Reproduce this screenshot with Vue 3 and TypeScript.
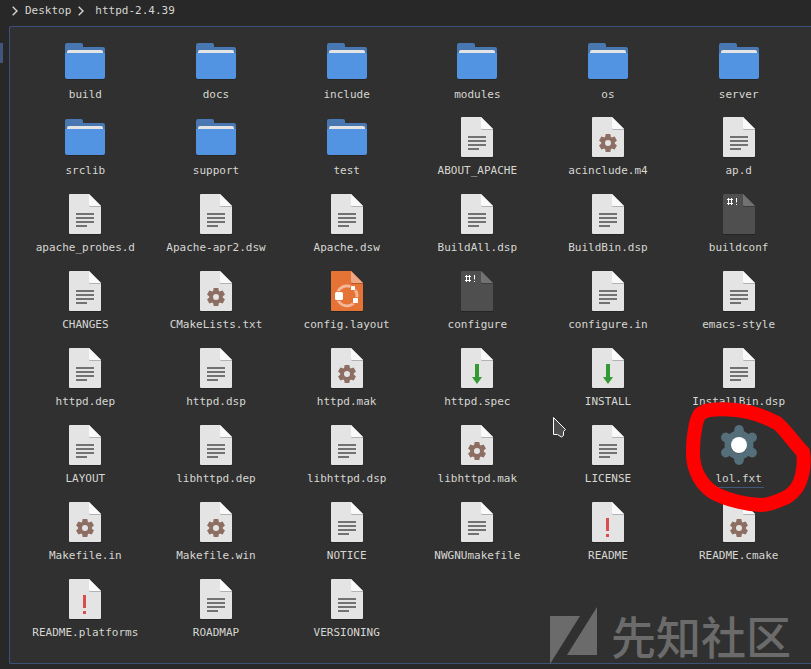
<script setup lang="ts">
type Kind = 'folder' | 'text' | 'gear' | 'script' | 'layout' | 'install' | 'readme' | 'program'

interface Entry {
  name: string
  kind: Kind
  selected?: boolean
}

const entries: Entry[] = [
  { name: 'build', kind: 'folder' },
  { name: 'docs', kind: 'folder' },
  { name: 'include', kind: 'folder' },
  { name: 'modules', kind: 'folder' },
  { name: 'os', kind: 'folder' },
  { name: 'server', kind: 'folder' },
  { name: 'srclib', kind: 'folder' },
  { name: 'support', kind: 'folder' },
  { name: 'test', kind: 'folder' },
  { name: 'ABOUT_APACHE', kind: 'text' },
  { name: 'acinclude.m4', kind: 'gear' },
  { name: 'ap.d', kind: 'text' },
  { name: 'apache_probes.d', kind: 'text' },
  { name: 'Apache-apr2.dsw', kind: 'text' },
  { name: 'Apache.dsw', kind: 'text' },
  { name: 'BuildAll.dsp', kind: 'text' },
  { name: 'BuildBin.dsp', kind: 'text' },
  { name: 'buildconf', kind: 'script' },
  { name: 'CHANGES', kind: 'text' },
  { name: 'CMakeLists.txt', kind: 'gear' },
  { name: 'config.layout', kind: 'layout' },
  { name: 'configure', kind: 'script' },
  { name: 'configure.in', kind: 'text' },
  { name: 'emacs-style', kind: 'text' },
  { name: 'httpd.dep', kind: 'text' },
  { name: 'httpd.dsp', kind: 'text' },
  { name: 'httpd.mak', kind: 'gear' },
  { name: 'httpd.spec', kind: 'install' },
  { name: 'INSTALL', kind: 'install' },
  { name: 'InstallBin.dsp', kind: 'text' },
  { name: 'LAYOUT', kind: 'text' },
  { name: 'libhttpd.dep', kind: 'text' },
  { name: 'libhttpd.dsp', kind: 'text' },
  { name: 'libhttpd.mak', kind: 'gear' },
  { name: 'LICENSE', kind: 'text' },
  { name: 'lol.fxt', kind: 'program', selected: true },
  { name: 'Makefile.in', kind: 'gear' },
  { name: 'Makefile.win', kind: 'gear' },
  { name: 'NOTICE', kind: 'text' },
  { name: 'NWGNUmakefile', kind: 'text' },
  { name: 'README', kind: 'readme' },
  { name: 'README.cmake', kind: 'gear' },
  { name: 'README.platforms', kind: 'readme' },
  { name: 'ROADMAP', kind: 'text' },
  { name: 'VERSIONING', kind: 'text' },
]

const pageFill: Partial<Record<Kind, string>> = { script: '#4f4f4f', layout: '#e57335' }
const foldFill: Partial<Record<Kind, string>> = { script: '#727272', layout: '#f0a783' }
const teeth = [0, 60, 120, 180, 240, 300]
</script>

<template>
  <div class="window">
    <nav class="path" aria-label="Path">
      <svg class="chevron" viewBox="0 0 6 10" aria-hidden="true"><path d="M.7.7 5 5 .7 9.3" /></svg>
      <a href="#">Desktop</a>
      <svg class="chevron" viewBox="0 0 6 10" aria-hidden="true"><path d="M.7.7 5 5 .7 9.3" /></svg>
      <a href="#" class="current">httpd-2.4.39</a>
    </nav>

    <div class="body">
      <div class="side"><span class="marker"></span></div>
      <main class="panel">
        <ul class="grid">
          <li v-for="e in entries" :key="e.name" class="entry" :class="{ selected: e.selected }">
            <svg class="icon" viewBox="0 0 48 48" aria-hidden="true">
              <template v-if="e.kind === 'folder'">
                <path d="M4 8q0-2 2-2h14q2 0 2 2v2h20q2 0 2 2v10H4z" fill="#4877b1" />
                <path d="M6 20v-5q0-2 2-2h32q2 0 2 2v5z" fill="#e4e4e4" />
                <path d="M4 18h40v23q0 2-2 2H6q-2 0-2-2z" fill="#272727" />
                <path d="M4 17q0-1 1-1h38q1 0 1 1v23q0 2-2 2H6q-2 0-2-2z" fill="#5294e2" />
              </template>
              <template v-else-if="e.kind === 'program'">
                <circle cx="24" cy="24" r="14.500" fill="#546e7a" />
                <path
                  v-for="t in teeth"
                  :key="t"
                  d="M24 24V8.800"
                  stroke="#546e7a"
                  stroke-width="9.600"
                  stroke-linecap="round"
                  :transform="`rotate(${t} 24 24)`"
                />
                <circle cx="24" cy="24.500" r="8.200" fill="#3f535c" />
                <circle cx="24" cy="24" r="8" fill="#fff" />
              </template>
              <template v-else>
                <path d="M8 6q0-1 1-1h19l12 12v27q0 1-1 1H9q-1 0-1-1z" fill="#252525" />
                <path d="M8 5q0-1 1-1h19l12 12v27q0 1-1 1H9q-1 0-1-1z" :fill="pageFill[e.kind] ?? '#e4e4e4'" />
                <path d="M28 15.500q0 1.500 1.500 1.500H40v-1z" fill="#000" opacity=".22" />
                <path d="M28 4v10.500q0 1.500 1.500 1.500H40z" :fill="foldFill[e.kind] ?? '#fafafa'" />

                <path v-if="e.kind === 'text'" d="M15 23h18v2H15zM15 27h18v2H15zM15 31h18v2H15zM15 35h11v2H15z" fill="#727272" />
                <g v-else-if="e.kind === 'gear'">
                  <path v-for="t in teeth" :key="t" d="M21.700 21h4.600l.8 4h-6.200z" fill="#8d6e63" :transform="`rotate(${t} 24 30)`" />
                  <circle cx="24" cy="30" r="4.800" fill="none" stroke="#8d6e63" stroke-width="3.600" />
                </g>
                <g v-else-if="e.kind === 'script'" fill="none" stroke="#fff">
                  <path d="M13.500 8v7M16.500 8v7M12 9.500h6M12 13.500h6M21.500 8v4.500M21.500 14v1" />
                </g>
                <g v-else-if="e.kind === 'layout'">
                  <circle cx="24" cy="28.800" r="10" fill="none" stroke="#f4b99c" stroke-width="2.800" />
                  <g fill="#fff" stroke="#e57335" stroke-width="1.600" paint-order="stroke">
                    <rect x="12" y="25" width="8" height="8" rx="1.500" />
                    <rect x="28" y="19" width="4" height="4" rx=".5" />
                    <rect x="30" y="31" width="5" height="5" rx=".5" />
                  </g>
                </g>
                <path v-else-if="e.kind === 'install'" d="M22 20h4v13h3l-5 7-5-7h3z" fill="#339933" />
                <path v-else d="M22 20h3v13h-3zM22 36h3v3h-3z" fill="#da4d4d" />
              </template>
            </svg>
            <span class="label">{{ e.name }}</span>
          </li>
        </ul>
      </main>
    </div>

    <svg class="cursor" viewBox="0 0 14 22" aria-hidden="true">
      <path d="M1.500 1.500V18.500H5.500L9.500 21 11.500 19.500V15.500L13.500 13.500z" />
    </svg>

    <svg class="circled" viewBox="0 0 127 115" aria-hidden="true">
      <path d="M16 14C22 9 34 9 45 9.500C62 10 78 15 93 23C101 29 110 43 119 52C120 58 120 67 118 75C116 85 111 92 103 97C94 101 86 105 77 105C62 104 47 101 34 95C25 91 20 86 15 77C10 68 9 62 9 54C9 46 9 38 11 30Q12 20 16 14Z" />
    </svg>

    <div class="watermark">
      <svg class="mark" viewBox="0 0 48 58" aria-hidden="true"><path d="M0 9h30L0 57zM47 0v48H17z" /></svg>
      <span>先知社区</span>
    </div>
  </div>
</template>

<style>
body {
  margin: 0;
  background: #282828;
}
</style>

<style scoped>
.window {
  position: relative;
  min-height: 100vh;
  box-sizing: border-box;
  overflow: hidden;
  background: #282828;
  color: #d6d6d2;
  font: 11px/14px "DejaVu Sans Mono", monospace;
}

.path {
  display: flex;
  align-items: center;
  gap: 7px;
  height: 20px;
  padding: 1px 0 5px 12px;
}

.path a {
  color: inherit;
  text-decoration: none;
}

.path .current {
  margin-left: 4px;
}

.chevron {
  width: 6px;
  height: 10px;
  fill: none;
  stroke: #d3d3d3;
  stroke-width: 1.400;
}

.body {
  display: flex;
}

.side {
  width: 9px;
}

.marker {
  display: block;
  width: 3px;
  height: 20px;
  margin-top: 17px;
  background: #42557d;
}

.panel {
  flex: 1;
  padding: 10px 7px 11px 10px;
  border: 1px solid #3d5079;
  border-right: 0;
  border-radius: 2px 0 0 2px;
  background: #303030;
}

.grid {
  display: grid;
  grid-template-columns: repeat(6, minmax(0, 1fr));
  grid-template-rows: 76px;
  grid-auto-rows: 77px;
  margin: 0;
  padding: 0;
  list-style: none;
}

.entry {
  display: flex;
  flex-direction: column;
  align-items: center;
  gap: 3px;
}

.icon {
  width: 48px;
  height: 48px;
  flex: none;
}

.label {
  white-space: nowrap;
}

.selected .label {
  padding: 0 2px 1px;
  border-bottom: 1px solid #42557d;
}

.cursor {
  position: absolute;
  left: 552px;
  top: 416px;
  width: 14px;
  height: 22px;
  fill: #4d4d4d;
  stroke: #fff;
  stroke-width: 1;
}

.circled {
  position: absolute;
  left: 684px;
  top: 400px;
  width: 127px;
  height: 115px;
  fill: none;
  stroke: #f00;
  stroke-width: 14;
  stroke-linejoin: round;
}

.watermark {
  position: absolute;
  right: 20px;
  bottom: 4px;
  display: flex;
  align-items: center;
  gap: 13px;
  color: #6b6b6b;
  font: 500 45px/58px "Noto Sans CJK SC", sans-serif;
}

.mark {
  width: 48px;
  height: 58px;
  fill: #6b6b6b;
}
</style>
